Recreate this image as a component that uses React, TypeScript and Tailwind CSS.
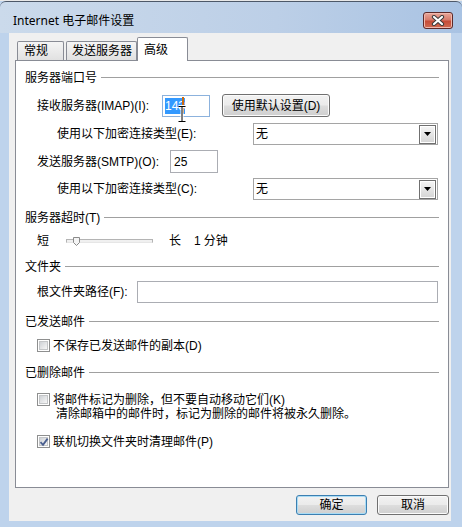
import React from 'react';

const GroupHeading = ({ label, className = '' }: { label: string; className?: string }) => (
  <div className={`flex h-[16px] items-center ${className}`}>
    <span className="leading-[16px]">{label}</span>
    <div className="ml-[4px] h-px flex-1 -translate-y-px bg-[#a0a0a0]" />
  </div>
);

const DropArrow = () => (
  <svg width="7" height="4" viewBox="0 0 7 4">
    <path d="M0 0H7L3.5 4Z" fill="#000" />
  </svg>
);

const Select = ({ value }: { value: string }) => (
  <div className="flex h-[22px] w-[185px] items-center border border-[#a5a5a5] bg-white pl-[2px] pr-px">
    <span className="flex-1 leading-[16px]">{value}</span>
    <div className="flex h-[19px] w-[17px] items-center justify-center border border-[#707070] bg-linear-to-b from-[#f6f6f6] to-[#d4d4d4] shadow-[inset_0_0_0_1px_#ffffff]">
      <DropArrow />
    </div>
  </div>
);

const CheckBox = ({ checked = false }: { checked?: boolean }) => (
  <span className="relative flex h-[13px] w-[13px] shrink-0 items-center justify-center border border-[#8e8f8f] bg-white">
    <span className="h-[9px] w-[9px] border border-[#c4c6c8] bg-linear-to-br from-[#cfd2d6] to-[#f7f7f7]" />
    {checked && (
      <svg className="absolute left-[1px] top-[1px]" width="10" height="10" viewBox="0 0 10 10">
        <path d="M1.5 5.2L4 7.8L8.6 1.6" fill="none" stroke="#4a5f8f" strokeWidth="1.8" />
      </svg>
    )}
  </span>
);

const PushButton = ({ label, primary = false, className = '' }: { label: string; primary?: boolean; className?: string }) => (
  <button
    className={`flex items-center justify-center rounded-[3px] border bg-[linear-gradient(#f2f2f2_0%,#ebebeb_48%,#dddddd_52%,#cfcfcf_100%)] leading-[16px] ${
      primary ? 'border-[#3c7fb1] shadow-[inset_0_0_0_1px_#a9dcf5]' : 'border-[#707070] shadow-[inset_0_0_0_1px_#fbfbfb]'
    } ${className}`}
  >
    {label}
  </button>
);

const App = () => {
  return (
    <div className="relative h-[527px] w-[462px] overflow-hidden bg-[#bed3ec] font-['Liberation_Sans','Noto_Sans_CJK_SC',sans-serif] text-[12px] text-black">
      <div className="h-px bg-[#e8e8e8]" />
      {/* title bar */}
      <div className="flex h-[32px] items-start justify-between rounded-t-[6px] border-t border-[#4d5868] bg-[linear-gradient(90deg,#cbdaeb,#bccfe7_60%,#a9c3e3)] pl-[13px] pr-[9px]">
        <span className="mt-[11px] font-['Noto_Sans','Noto_Sans_CJK_SC',sans-serif] text-[12px] leading-[16px]">
          Internet 电子邮件设置
        </span>
        <div className="mt-[10px] flex h-[17px] w-[30px] items-center justify-center rounded-[3px] border border-[#5d2a2a] bg-[linear-gradient(#e8a79a_0%,#d77c6c_45%,#c64c38_55%,#cf6b52_100%)] shadow-[inset_0_0_0_1px_#f0b8ad]">
          <svg width="14" height="11" viewBox="0 0 14 11">
            <path d="M3 2L11 9M11 2L3 9" stroke="#3c3c3c" strokeWidth="4.2" strokeLinecap="round" />
            <path d="M3 2L11 9M11 2L3 9" stroke="#ffffff" strokeWidth="2.2" strokeLinecap="round" />
          </svg>
        </div>
      </div>

      <div className="flex">
        <div className="w-[9px]" />
        {/* client area */}
        <div className="flex h-[488px] w-[442px] flex-col bg-[#f0f0f0] pl-[6px] pr-[2px] pt-[4px]">
          {/* tabs */}
          <div className="flex h-[23px] items-end pl-[2px]">
            <div className="flex h-[19px] w-[47px] items-center rounded-t-[2px] border border-b-0 border-[#898c95] bg-linear-to-b from-[#f5f5f5] to-[#e1e1e1] pl-[6px] leading-[16px]">
              常规
            </div>
            <div className="ml-[2px] flex h-[19px] w-[71px] items-center rounded-t-[2px] border border-b-0 border-[#898c95] bg-linear-to-b from-[#f5f5f5] to-[#e1e1e1] pl-[5px] leading-[16px]">
              发送服务器
            </div>
            <div className="relative z-10 -mb-px flex h-[24px] w-[51px] items-center rounded-t-[2px] border border-b-0 border-[#898c95] bg-white pl-[6px] leading-[16px]">
              高级
            </div>
          </div>

          {/* panel */}
          <div className="flex h-[428px] w-[434px] flex-col border border-[#898c95] bg-white pl-[9px] pr-[9px] pt-[9px]">
            <GroupHeading label="服务器端口号" />

            <div className="mt-[8px] flex h-[23px] items-center pl-[12px]">
              <span className="w-[125px]">接收服务器(IMAP)(I):</span>
              <div className="flex h-[22px] w-[48px] items-center border border-[#8cb2dd] bg-white pl-[2px]">
                <span className="bg-[#3399ff] leading-[16px] text-white">143</span>
              </div>
              <PushButton label="使用默认设置(D)" className="ml-[12px] h-[23px] w-[108px]" />
            </div>

            <div className="mt-[6px] flex h-[22px] items-center pl-[32px]">
              <span className="w-[196px]">使用以下加密连接类型(E):</span>
              <Select value="无" />
            </div>

            <div className="mt-[5px] flex h-[23px] items-center pl-[12px]">
              <span className="w-[133px]">发送服务器(SMTP)(O):</span>
              <div className="flex h-[23px] w-[48px] items-center border border-[#abadb3] bg-white pl-[3px]">25</div>
            </div>

            <div className="mt-[5px] flex h-[22px] items-center pl-[32px]">
              <span className="w-[196px]">使用以下加密连接类型(C):</span>
              <Select value="无" />
            </div>

            <GroupHeading label="服务器超时(T)" className="mt-[10px]" />

            <div className="mt-[7px] flex h-[16px] items-center pl-[12px]">
              <span>短</span>
              <div className="relative ml-[17px] h-[4px] w-[87px] border border-[#b4b4b4] border-b-[#e6e6e6] bg-[#f0f0f0]">
                <svg className="absolute -top-[3px] left-[6px]" width="7" height="9" viewBox="0 0 7 9">
                  <path d="M0.5 0.5H6.5V5.5L3.5 8.5L0.5 5.5Z" fill="#f4f4f4" stroke="#8a8a8a" />
                </svg>
              </div>
              <span className="ml-[16px]">长</span>
              <span className="ml-[13px]">1</span>
              <span className="ml-[3px]">分钟</span>
            </div>

            <GroupHeading label="文件夹" className="mt-[10px]" />

            <div className="mt-[6px] flex h-[22px] items-center pl-[12px]">
              <span className="w-[100px]">根文件夹路径(F):</span>
              <div className="h-[22px] w-[301px] border border-[#abadb3] bg-white" />
            </div>

            <GroupHeading label="已发送邮件" className="mt-[11px]" />

            <div className="mt-[8px] flex h-[15px] items-center pl-[12px]">
              <CheckBox />
              <span className="ml-[3px]">不保存已发送邮件的副本(D)</span>
            </div>

            <GroupHeading label="已删除邮件" className="mt-[12px]" />

            <div className="mt-[11px] flex h-[15px] items-center pl-[12px]">
              <CheckBox />
              <span className="ml-[3px]">将邮件标记为删除，但不要自动移动它们(K)</span>
            </div>
            <div className="flex h-[14px] items-center pl-[31px]">
              清除邮箱中的邮件时，标记为删除的邮件将被永久删除。
            </div>
            <div className="mt-[13px] flex h-[15px] items-center pl-[12px]">
              <CheckBox checked />
              <span className="ml-[3px]">联机切换文件夹时清理邮件(P)</span>
            </div>
          </div>

          {/* dialog buttons */}
          <div className="mt-[7px] flex justify-end">
            <PushButton label="确定" primary className="h-[20px] w-[71px]" />
            <PushButton label="取消" className="ml-[10px] h-[20px] w-[72px]" />
          </div>
        </div>
        <div className="w-[11px]" />
      </div>

      {/* mouse pointer over the port field */}
      <svg className="pointer-events-none absolute left-[177px] top-[96px]" width="10" height="28" viewBox="0 0 10 28">
        <rect x="5" y="1" width="2" height="16" fill="#cc6a10" />
        <path d="M1.5 10.5H8.5M5 10.5V25.5M1.5 25.5H8.5" stroke="#ffffff" strokeWidth="3" />
        <path d="M1.5 10.5H8.5M5 10.5V25.5M1.5 25.5H8.5" stroke="#000000" strokeWidth="1" />
      </svg>
    </div>
  );
};

export default App;
